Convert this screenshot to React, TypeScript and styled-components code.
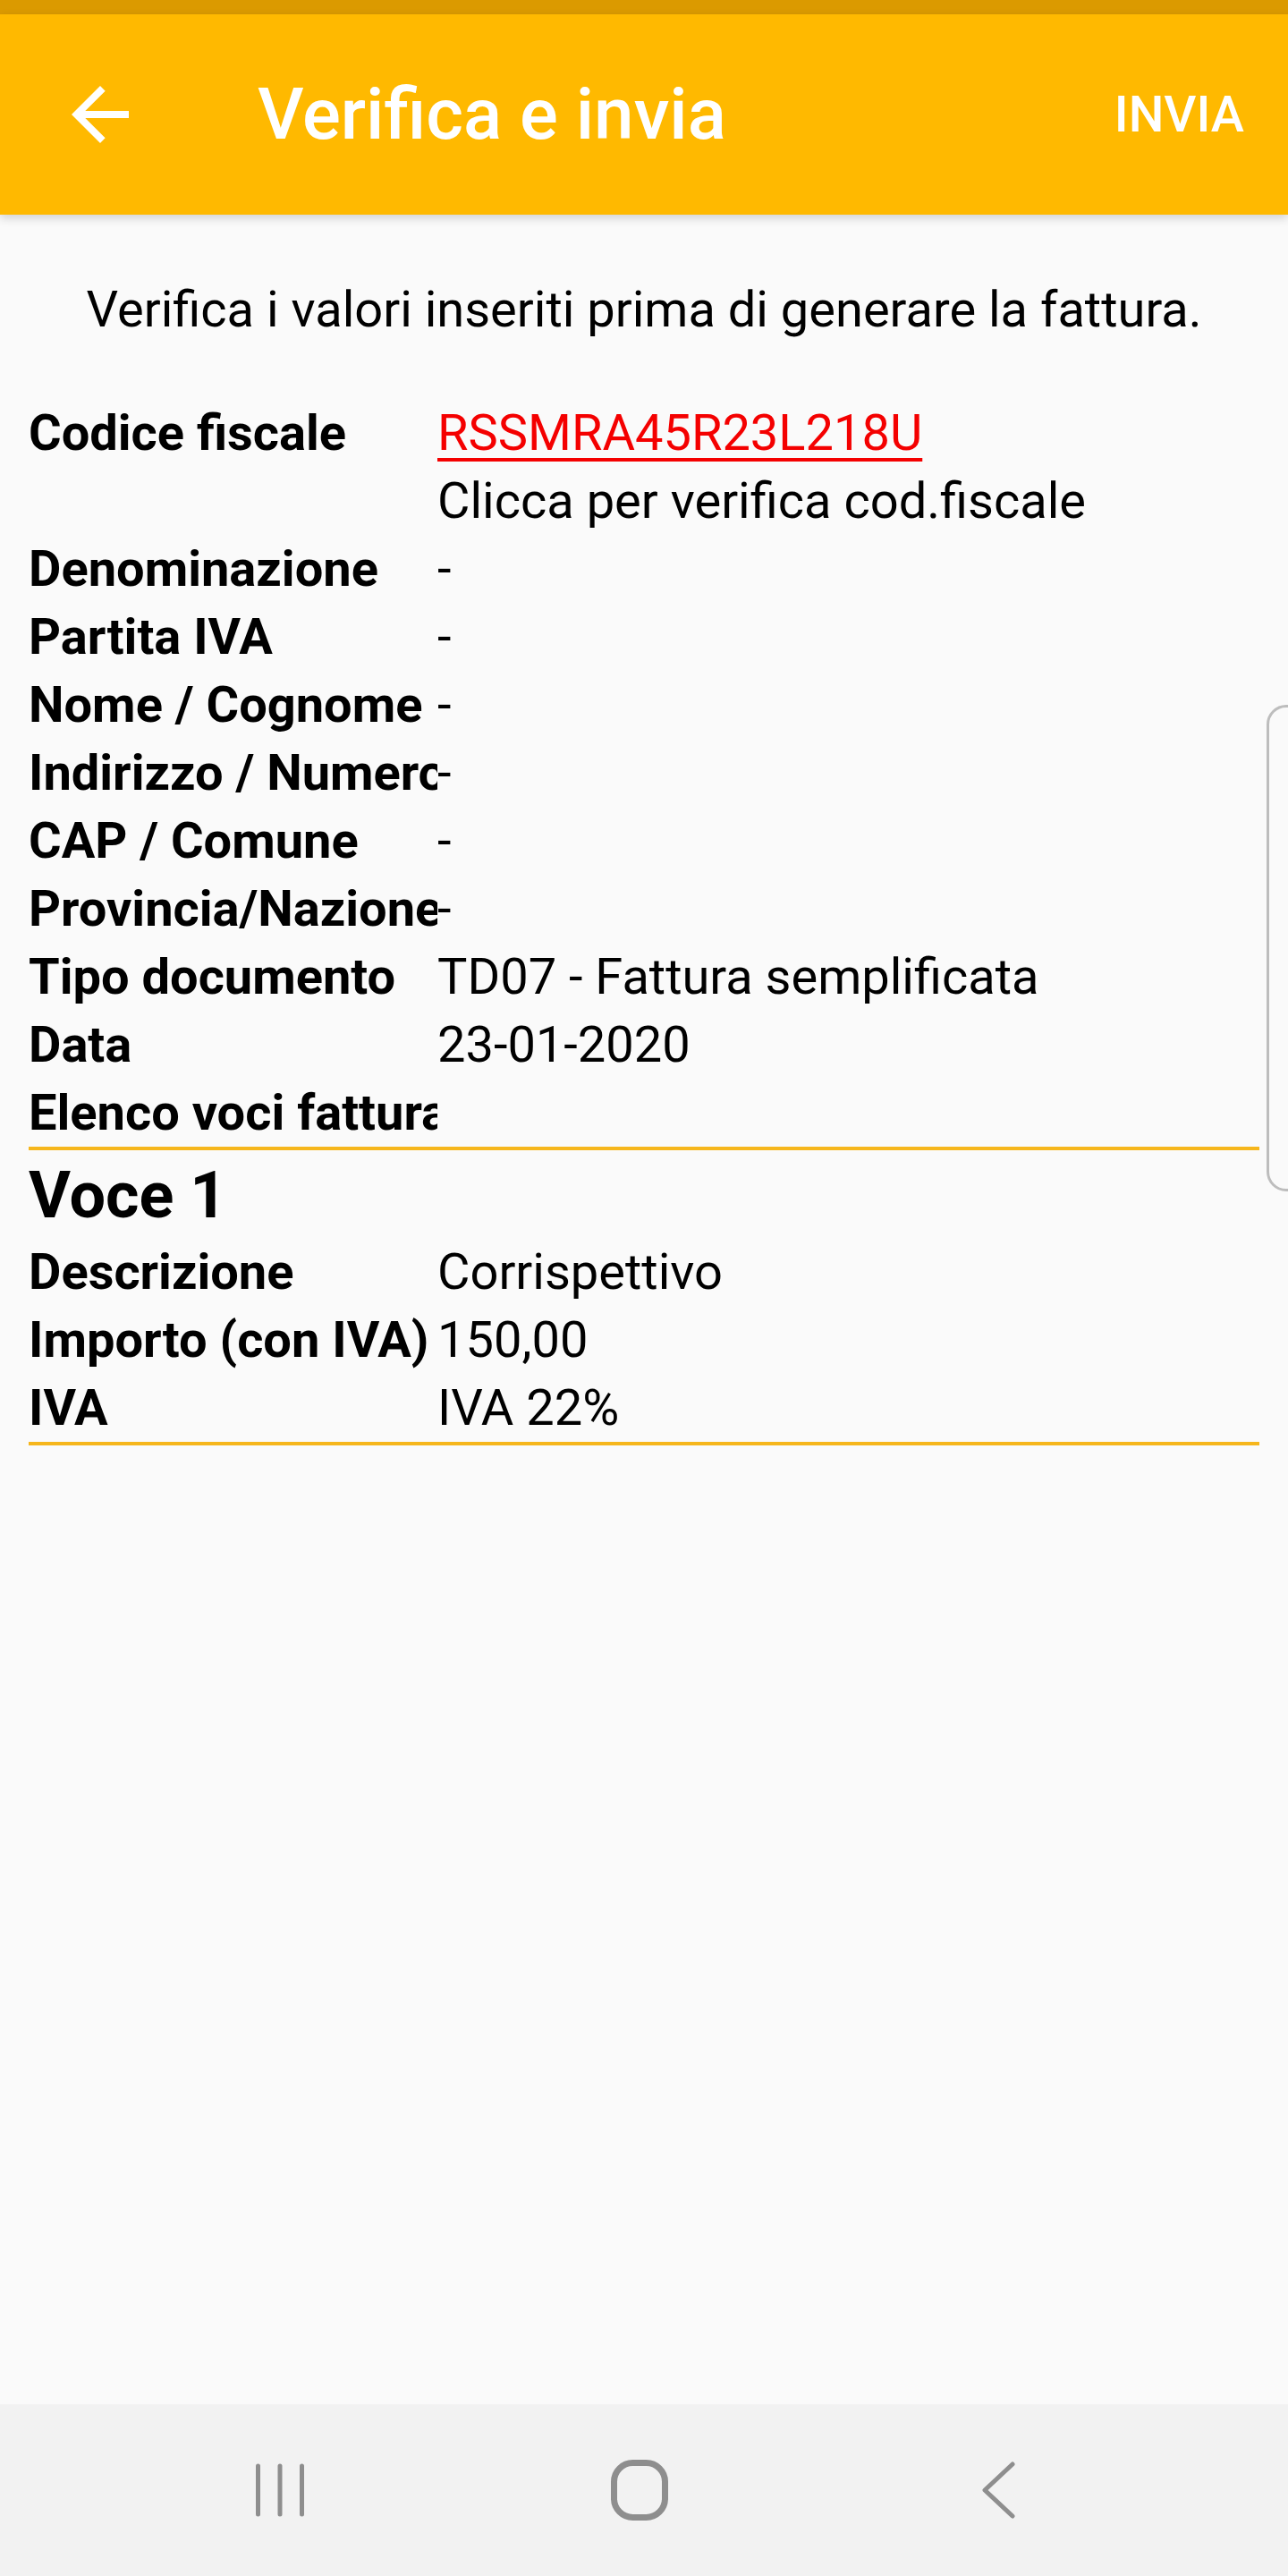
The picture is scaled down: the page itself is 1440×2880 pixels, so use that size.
import React from "react";
import styled, {createGlobalStyle} from "styled-components";
import {MdArrowBack} from "react-icons/md";

const GlobalStyle = createGlobalStyle`
  html, body {
    margin: 0;
    padding: 0;
    background: #fafafa;
  }
  body {
    font-family: Roboto, "Noto Sans", "Liberation Sans", sans-serif;
    color: #000;
  }
`;

const Screen = styled.div`
  position: relative;
  display: flex;
  flex-direction: column;
  width: 1440px;
  height: 2880px;
  background: #fafafa;
  overflow: hidden;
`;

const StatusBar = styled.div`
  height: 16px;
  background: #db9a00;
`;

const Toolbar = styled.header`
  position: relative;
  z-index: 2;
  display: flex;
  align-items: center;
  height: 224px;
  padding: 0 49px 0 64px;
  background: #ffb900;
  box-shadow: 0 4px 10px rgba(0, 0, 0, 0.16);
  color: #fff;
`;

const BackButton = styled.button`
  display: flex;
  align-items: center;
  justify-content: center;
  width: 96px;
  height: 96px;
  padding: 0;
  border: 0;
  background: none;
  color: #fff;
`;

const Title = styled.h1`
  flex: 1;
  margin: 0 0 0 128px;
  font-size: 80px;
  font-weight: 500;
  line-height: 96px;
`;

const Action = styled.span`
  font-size: 56px;
  font-weight: 500;
`;

const Content = styled.main`
  flex: 1;
  padding: 68px 32px 0;
`;

const Intro = styled.p`
  margin: 0 0 62px;
  font-size: 56px;
  line-height: 76px;
  text-align: center;
`;

const Section = styled.section`
  border-bottom: 4px solid #f6b61c;
`;

const Row = styled.div`
  display: grid;
  grid-template-columns: 457px 1fr;
  font-size: 56px;
  line-height: 76px;
`;

const Label = styled.div`
  font-weight: 700;
  white-space: nowrap;
  overflow: hidden;
`;

const Value = styled.div<{$link?: boolean}>`
  font-weight: 400;
  color: ${p => (p.$link ? "#f40000" : "#000")};
  text-decoration: ${p => (p.$link ? "underline" : "none")};
  text-decoration-thickness: 4px;
  text-underline-offset: 9px;
`;

const ItemTitle = styled.h2`
  margin: 0;
  padding-top: 4px;
  font-size: 72px;
  font-weight: 700;
  line-height: 94px;
`;

const NavBar = styled.nav`
  display: flex;
  align-items: center;
  justify-content: center;
  gap: 322px;
  height: 192px;
  padding-right: 10px;
  background: #f2f2f2;
`;

const NavKey = styled.div`
  display: flex;
  align-items: center;
  justify-content: center;
  width: 80px;
  height: 80px;
`;

const EdgeHandle = styled.div`
  position: absolute;
  top: 788px;
  right: -20px;
  width: 38px;
  height: 538px;
  border: 3px solid #bdbdbd;
  border-radius: 24px;
  background: #fafafa;
`;

const header = [
  ["Denominazione", "-"],
  ["Partita IVA", "-"],
  ["Nome / Cognome", "-"],
  ["Indirizzo / Numero", "-"],
  ["CAP / Comune", "-"],
  ["Provincia/Nazione", "-"],
  ["Tipo documento", "TD07 - Fattura semplificata"],
  ["Data", "23-01-2020"],
  ["Elenco voci fattura", ""],
];

const voce = [
  ["Descrizione", "Corrispettivo"],
  ["Importo (con IVA)", "150,00"],
  ["IVA", "IVA 22%"],
];

const navColor = "#8e8e8e";

export default function App() {
  return (
    <Screen>
      <GlobalStyle />
      <StatusBar />
      <Toolbar>
        <BackButton aria-label="Indietro">
          <MdArrowBack size={96} />
        </BackButton>
        <Title>Verifica e invia</Title>
        <Action>INVIA</Action>
      </Toolbar>

      <Content>
        <Intro>Verifica i valori inseriti prima di generare la fattura.</Intro>

        <Section>
          <Row>
            <Label>Codice fiscale</Label>
            <div>
              <Value $link>RSSMRA45R23L218U</Value>
              <Value>Clicca per verifica cod.fiscale</Value>
            </div>
          </Row>
          {header.map(([label, value]) => (
            <Row key={label}>
              <Label>{label}</Label>
              <Value>{value}</Value>
            </Row>
          ))}
        </Section>

        <Section>
          <ItemTitle>Voce 1</ItemTitle>
          {voce.map(([label, value]) => (
            <Row key={label}>
              <Label>{label}</Label>
              <Value>{value}</Value>
            </Row>
          ))}
        </Section>
      </Content>

      <NavBar>
        <NavKey>
          <svg width="60" height="64" viewBox="0 0 60 64">
            <g stroke={navColor} strokeWidth="5" strokeLinecap="round">
              <line x1="5.5" y1="5" x2="5.5" y2="59" />
              <line x1="30" y1="5" x2="30" y2="59" />
              <line x1="54.5" y1="5" x2="54.5" y2="59" />
            </g>
          </svg>
        </NavKey>
        <NavKey>
          <svg width="64" height="68" viewBox="0 0 64 68">
            <rect x="3.5" y="3.5" width="57" height="61" rx="21" fill="none" stroke={navColor} strokeWidth="7" />
          </svg>
        </NavKey>
        <NavKey>
          <svg width="40" height="64" viewBox="0 0 40 64">
            <polyline
              points="35,3 4,32 35,61"
              fill="none"
              stroke={navColor}
              strokeWidth="5"
              strokeLinecap="round"
              strokeLinejoin="round"
            />
          </svg>
        </NavKey>
      </NavBar>

      <EdgeHandle />
    </Screen>
  );
}
